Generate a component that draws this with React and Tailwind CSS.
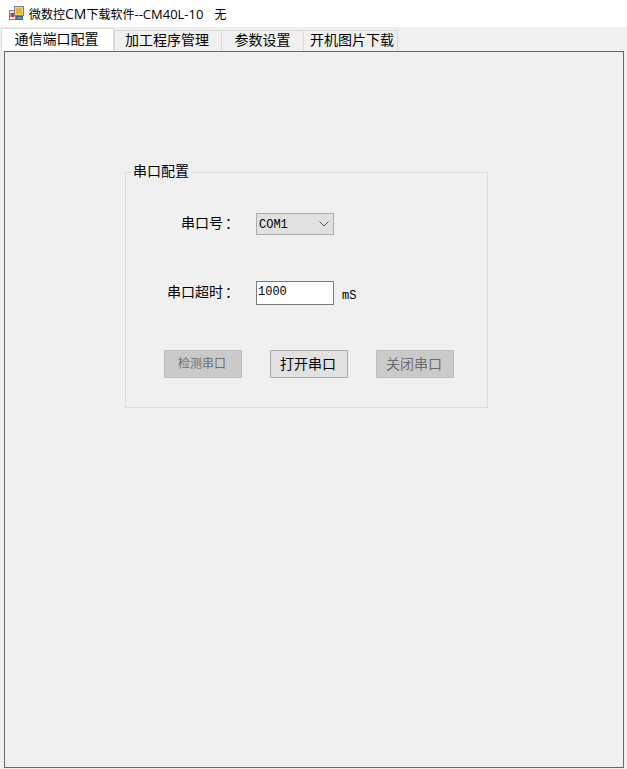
const Tab = ({ label, className }) => (
  <div className={`flex items-center justify-center pb-[4px] text-[14px] leading-none text-black ${className}`}>{label}</div>
);

const ActionButton = ({ label, disabled, className }) => (
  <button
    className={
      disabled
        ? `w-[78px] h-[28px] border border-[#bcbcbc] bg-[#cacaca] leading-none pb-[2px] pr-[2px] text-[#6d6d6d] ${className}`
        : `w-[78px] h-[28px] border border-[#adadad] bg-[#e1e1e1] leading-none pb-[2px] pr-[2px] text-black ${className}`
    }
  >
    {label}
  </button>
);

const FieldLabel = ({ text }) => (
  <span className="w-[113px] text-right text-[14px] leading-none pb-[5px] text-black whitespace-pre">
    {text}
    <span className="inline-block ml-[2px]">：</span>
  </span>
);

export default function App() {
  return (
    <div className="w-[627px] h-[769px] flex flex-col bg-[#f0f0f0] overflow-hidden font-['Noto_Sans_CJK_SC',sans-serif]">
      <div className="h-[27px] bg-white flex items-center pl-[9px] shrink-0">
        <svg width="15" height="15" viewBox="0 0 15 15" className="shrink-0">
          <rect x="0.5" y="4.5" width="6" height="9" fill="#e8e8e8" stroke="#7f7f7f" />
          <rect x="1.5" y="7" width="4" height="4" fill="#d8342c" />
          <rect x="5.5" y="0.5" width="9" height="9" fill="#f5d76e" stroke="#6f7f9f" />
          <rect x="7" y="2" width="6" height="6" fill="#e8b82e" />
          <rect x="7.5" y="10.5" width="6" height="3" fill="#5f86c8" stroke="#4a5f8c" />
        </svg>
        <span className="ml-[5px] text-[12px] leading-none text-black whitespace-pre font-['Open_Sans','Noto_Sans_CJK_SC',sans-serif]">
          微数控<span className="text-[14px]">CM</span>下载软件<span className="text-[13px]">--CM40L-10</span>
          <span className="ml-[11px]">无</span>
        </span>
      </div>

      <div className="h-[24px] shrink-0 flex items-end pl-[1px]">
        <Tab label="通信端口配置" className="w-[113px] h-[23px] bg-white border-t border-l border-r border-[#d9d9d9] pr-[2px]" />
        <Tab label="加工程序管理" className="w-[108px] h-[21px] border border-b-0 border-[#d9d9d9] pr-[2px]" />
        <Tab label="参数设置" className="w-[82px] h-[21px] border-r border-t border-[#d9d9d9]" />
        <Tab label="开机图片下载" className="w-[94px] h-[21px] border-r border-t border-[#d9d9d9] pl-[3px]" />
      </div>

      <div className="ml-[4px] mr-[3px] mb-[1px] flex-1 border border-[#696969] bg-[#f0f0f0] pl-[120px] pt-[120px]">
        <div className="relative w-[363px] h-[236px] border border-[#dcdcdc] flex flex-col">
          <div className="absolute left-[5px] top-[-10px] px-[2px] bg-[#f0f0f0] text-[14px] leading-[14px] text-black">串口配置</div>

          <div className="flex items-center mt-[40px] h-[22px]">
            <FieldLabel text="串口号" />
            <div className="ml-[17px] w-[78px] h-[22px] border border-[#adadad] bg-[#e1e1e1] flex items-center justify-between pl-[2px] pr-[4px]">
              <span className="text-[12px] leading-none mt-[2px] font-['Liberation_Mono',monospace] text-black">COM1</span>
              <svg width="10" height="6" viewBox="0 0 10 6" fill="none" stroke="#606060" strokeWidth="1">
                <path d="M0.5 0.5 L5 5 L9.5 0.5" />
              </svg>
            </div>
          </div>

          <div className="flex items-center mt-[46px] h-[24px]">
            <FieldLabel text="串口超时" />
            <div className="ml-[17px] w-[78px] h-[24px] border border-[#7a7a7a] bg-white flex items-center pl-[1px] pb-[2px] text-[12px] leading-none font-['Liberation_Mono',monospace] text-black">1000</div>
            <span className="ml-[8px] mt-[5px] text-[12px] leading-none font-['Liberation_Mono',monospace] text-black">mS</span>
          </div>

          <div className="flex gap-[28px] mt-[46px] pl-[38px] -translate-y-px">
            <ActionButton label="检测串口" disabled className="text-[12px]" />
            <ActionButton label="打开串口" className="text-[14px]" />
            <ActionButton label="关闭串口" disabled className="text-[14px]" />
          </div>
        </div>
      </div>
    </div>
  );
}
